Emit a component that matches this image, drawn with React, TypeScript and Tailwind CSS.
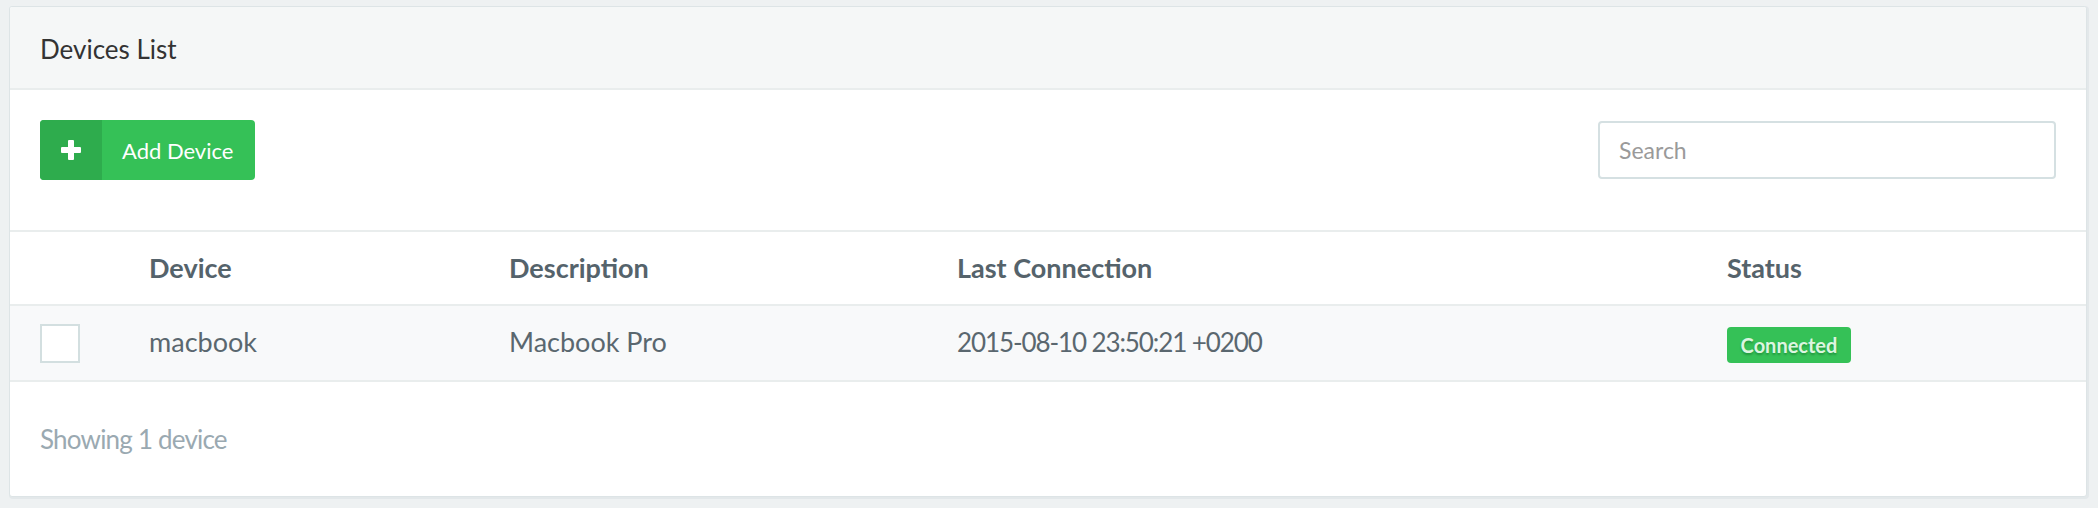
import { useState } from 'react';

type Device = {
  id: string;
  name: string;
  description: string;
  lastConnection: string;
  status: 'Connected' | 'Disconnected';
};

const devices: Device[] = [
  {
    id: 'macbook',
    name: 'macbook',
    description: 'Macbook Pro',
    lastConnection: '2015-08-10 23:50:21 +0200',
    status: 'Connected',
  },
];

const cols = 'grid grid-cols-[109px_360px_448px_770px_1fr] px-[30px]';

function PlusIcon() {
  return (
    <svg width="20" height="20" viewBox="0 0 20 20" fill="#fff">
      <rect x="0" y="7" width="20" height="6" rx="1" />
      <rect x="7" y="0" width="6" height="20" rx="1" />
    </svg>
  );
}

export default function App() {
  const [search, setSearch] = useState('');
  const [checked, setChecked] = useState<string[]>([]);

  const filtered = devices.filter(d =>
    d.name.toLowerCase().includes(search.toLowerCase()) ||
    d.description.toLowerCase().includes(search.toLowerCase())
  );

  return (
    <div className="min-h-screen bg-[#eef1f2] pt-[6px] pl-[9px] pr-[11px] pb-[11px] font-[Lato,sans-serif]">
      <div className="rounded-[3px] border border-[#dde4e6] bg-white shadow-[1px_1px_0_1px_#e3e8ea] overflow-hidden">
        <div className="h-[83px] flex items-center px-[30px] pt-[3px] bg-[#f5f7f7] border-b-2 border-[#e9eded]">
          <h2 className="text-[26px] text-[#333]">Devices List</h2>
        </div>

        <div className="flex items-center justify-between px-[30px] pt-[30px] pb-[50px]">
          <button className="flex h-[60px] rounded-[4px] overflow-hidden bg-[#35c157] text-white">
            <span className="w-[62px] h-full flex items-center justify-center bg-[#2eac4d]">
              <PlusIcon />
            </span>
            <span className="flex items-center pl-[20px] pr-[22px] text-[22px]">Add Device</span>
          </button>
          <input
            placeholder="Search"
            value={search}
            onChange={e => setSearch(e.target.value)}
            className="w-[458px] h-[58px] border-2 border-[#d5e0e2] rounded-[4px] pl-[19px] pr-3 text-[23px] text-[#555] placeholder:text-[#9a9a9a] outline-none"
          />
        </div>

        <div className={`${cols} h-[76px] items-center border-t-2 border-b-2 border-[#e9eded] text-[27px] font-bold text-[#55636b]`}>
          <div />
          <div>Device</div>
          <div>Description</div>
          <div>Last Connection</div>
          <div>Status</div>
        </div>

        {filtered.map(d => (
          <div key={d.id} className={`${cols} h-[76px] items-center bg-[#f8f9fa] border-b-2 border-[#e9eded] text-[27px] text-[#5a676f]`}>
            <div>
              <button
                onClick={() => setChecked(c => c.includes(d.id) ? c.filter(x => x !== d.id) : [...c, d.id])}
                className={`block w-[40px] h-[39px] border-2 border-[#d3dfe0] ${checked.includes(d.id) ? 'bg-[#35c157]' : 'bg-white'}`}
              />
            </div>
            <div className="-mt-[2px]">{d.name}</div>
            <div className="-mt-[2px]">{d.description}</div>
            <div className="-mt-[2px] text-[26px] tracking-[-1.1px]">{d.lastConnection}</div>
            <div>
              <span className="inline-flex items-center justify-center w-[124px] h-[36px] rounded-[4px] bg-[#35c157] text-[20px] font-bold text-[#dcf5e0] [text-shadow:0_2px_2px_rgba(0,80,20,0.35)]">
                {d.status}
              </span>
            </div>
          </div>
        ))}

        <div className="h-[114px] flex items-center px-[30px] text-[26px] tracking-[-0.8px] text-[#9aa9b1]">
          Showing {filtered.length} device{filtered.length === 1 ? '' : 's'}
        </div>
      </div>
    </div>
  );
}
